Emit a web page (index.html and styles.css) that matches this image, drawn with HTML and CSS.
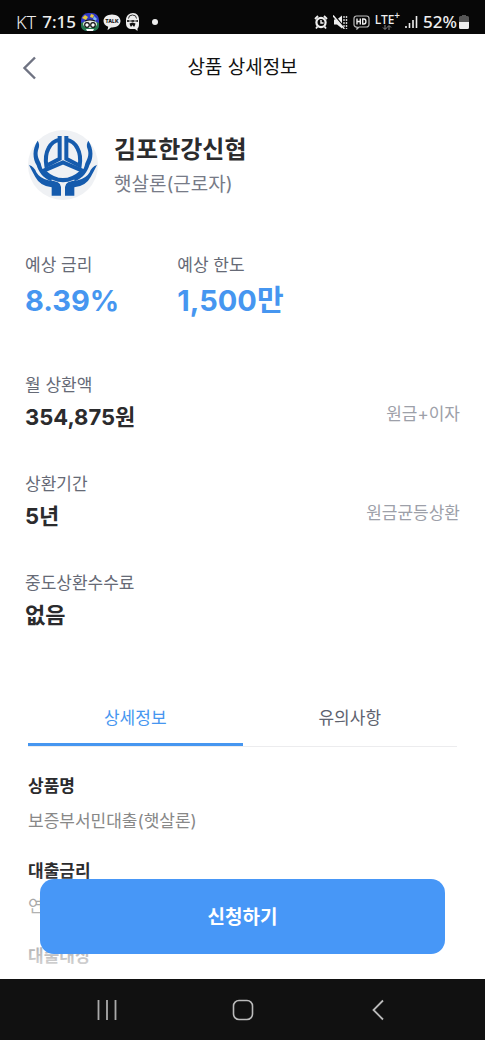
FILE: index.html
```html
<!DOCTYPE html>
<html lang="ko">
<head>
    <meta charset="UTF-8">
    <meta name="viewport" content="width=device-width, initial-scale=1.0">
    <title>상품 상세정보</title>
    <link rel="stylesheet" href="styles.css">
</head>
<body>
    <div class="status-bar">
        <span class="carrier">KT</span>
        <span class="clock">7:15</span>
        <div class="notices">
            <svg width="18" height="18" viewBox="0 0 18 18">
                <rect width="18" height="18" rx="7" fill="#3038c4"/>
                <path d="M1 5l3-3 3 2-2 3zM10 1l3 1-1 3-3-1z" fill="#e5c93a"/>
                <path d="M13 3l3 3-2 2-2-2z" fill="#7fb7ee"/>
                <path d="M0 10q9-5 18 0v2q0 6-7 6H7q-7 0-7-6z" fill="#26794f"/>
                <ellipse cx="9" cy="11" rx="7" ry="4" fill="#e8ece6"/>
                <circle cx="6" cy="12" r="2.3" fill="#fff" stroke="#111" stroke-width="1.2"/>
                <circle cx="12" cy="12" r="2.3" fill="#fff" stroke="#111" stroke-width="1.2"/>
                <path d="M4 8q5-2 10 0" fill="none" stroke="#111" stroke-width="1.2"/>
                <path d="M5 16h8l-1 2H6z" fill="#fff"/>
            </svg>
            <svg width="18" height="18" viewBox="0 0 18 18">
                <path d="M9 1.500c4.800 0 8.500 2.800 8.500 6.500s-3.700 6.500-8.500 6.500l-1 0-3.500 2.700.7-3.400C2.300 12.700.5 10.600.5 8 .5 4.300 4.200 1.500 9 1.500z" fill="#eee"/>
                <text x="9" y="10" class="talk">TALK</text>
            </svg>
            <svg width="16" height="18" viewBox="0 0 16 18">
                <path d="M8 0c4 0 6 3 6 7v4c0 2-.5 3.500-1.500 4.500V18L10 16H7c-4 0-6-2-6-6V7c0-4 3-7 7-7z" fill="#eee"/>
                <path d="M3.500 5.500q0-3.500 4-3.500t4 3.500" fill="none" stroke="#333"/>
                <path d="M2 7h11v2H2z" fill="#333"/>
                <path d="M4 8h2.500M9 8h2.500" stroke="#eee"/>
                <path d="M4.500 10.500l3-1 3 1-1 3h-1l-1-1.500-1 1.500h-1z" fill="#111"/>
            </svg>
            <span class="dot"></span>
        </div>
        <div class="signals">
            <svg width="14" height="16" viewBox="0 0 14 16">
                <circle cx="7" cy="8.500" r="4.600" fill="none" stroke="#eee" stroke-width="2.200"/>
                <path d="M1 5l3-3M13 5l-3-3M3.500 12.500l-1.500 2M10.500 12.500l1.500 2" stroke="#eee" stroke-width="1.800"/>
                <path d="M7 6v3h2.500" fill="none" stroke="#eee" stroke-width="1.400"/>
            </svg>
            <svg width="15" height="16" viewBox="0 0 15 16">
                <path d="M1 5.500h3L9 1.500v13L4 10.500H1z" fill="#eee"/>
                <path d="M1 1l10 12" stroke="#070707" stroke-width="1.500"/>
                <path d="M0 1.500l11 13" stroke="#eee" stroke-width="1.500"/>
                <path d="M11 2v13M13.500 2v13" fill="none" stroke="#ccc" stroke-width="1.400" stroke-dasharray="2 1"/>
            </svg>
            <svg width="17" height="16" viewBox="0 0 17 16">
                <path d="M3.500 2h10a2.500 2.500 0 0 1 2.500 2.500v6a2.500 2.500 0 0 1-2.500 2.500H6l-2 2v-2h-.5A2.500 2.500 0 0 1 1 10.500v-6A2.500 2.500 0 0 1 3.500 2z" fill="none" stroke="#bbb" stroke-width="1.200"/>
                <path d="M4 4.500v6M7.300 4.500v6M4 7.500h3.300M9.700 5v5h1.200q2 0 2-2.500t-2-2.500z" fill="none" stroke="#eee" stroke-width="1.400"/>
            </svg>
            <div class="lte">
                <span>LTE<sup>+</sup></span>
                <svg width="10" height="5" viewBox="0 0 10 5">
                    <path d="M3 0v4M1 2.500l2 2 2-2M7 5V1M5 2.500l2-2 2 2" fill="none" stroke="#888"/>
                </svg>
            </div>
            <svg width="13" height="14" viewBox="0 0 13 14">
                <path d="M1 11v2M4.500 8v5M8 5v8M11.500 1v12" stroke="#eee" stroke-width="1.600"/>
            </svg>
            <span class="percent">52%</span>
            <svg class="battery" width="10" height="14" viewBox="0 0 10 14">
                <path d="M3 0h4v1h1.500A1.500 1.500 0 0 1 10 2.500V7H0V2.500A1.500 1.500 0 0 1 1.500 1H3z" fill="#555"/>
                <path d="M0 7h10v5.500a1.500 1.500 0 0 1-1.500 1.500h-7A1.500 1.500 0 0 1 0 12.500z" fill="#eee"/>
            </svg>
        </div>
    </div>

    <header class="app-bar">
        <button type="button" class="back" aria-label="뒤로">
            <svg width="15" height="24" viewBox="0 0 15 24">
                <path d="M13 1.500L2.500 12 13 22.500" fill="none" stroke="#6f7382" stroke-width="2.400"/>
            </svg>
        </button>
        <h1>상품 상세정보</h1>
    </header>

    <div class="screen">
        <main class="content">
            <section class="brand">
                <svg class="logo" width="70" height="70" viewBox="6 6 210 210">
                    <circle cx="111" cy="111" r="105" fill="#eff1f4"/>
                    <g fill="none" stroke="#155bad" stroke-width="12">
                        <path d="M101 24v68L61 113Q56 82 68 60 78 40 101 35"/>
                        <path d="M121 24v68l40 21Q166 82 154 60 144 40 121 35"/>
                        <path d="M48 130l63-27 63 27"/>
                        <path d="M54 131Q111 182 168 131"/>
                    </g>
                    <g fill="#155bad">
                        <!-- fingers -->
                        <path d="M35 38C18 64 20 92 32 112 38 132 50 150 76 160L78 152C58 144 48 126 44 106 34 88 33 76 37 64 41 54 40 46 35 38z"/>
                        <path d="M187 38C204 64 202 92 190 112 184 132 172 150 146 160L144 152C164 144 174 126 178 106 188 88 189 76 185 64 181 54 182 46 187 38z"/>
                        <!-- palms and wrists -->
                        <path d="M9 111q16 5 22 22 10 18 36 24 38 2 38 20v26H77v-25Q42 174 28 147q-9-16-19-36z"/>
                        <path d="M213 111q-16 5-22 22-10 18-36 24-38 2-38 20v26h28v-25q35-4 49-31 9-16 19-36z"/>
                    </g>
                </svg>
                <div>
                    <h2>김포한강신협</h2>
                    <p>햇살론(근로자)</p>
                </div>
            </section>

            <dl class="rates">
                <div>
                    <dt>예상 금리</dt>
                    <dd>8.39%</dd>
                </div>
                <div>
                    <dt>예상 한도</dt>
                    <dd>1,500만</dd>
                </div>
            </dl>

            <div class="terms">
                <div class="term">
                    <div>
                        <p class="label">월 상환액</p>
                        <p class="value">354,875원</p>
                    </div>
                    <span class="note">원금+이자</span>
                </div>
                <div class="term">
                    <div>
                        <p class="label">상환기간</p>
                        <p class="value">5년</p>
                    </div>
                    <span class="note">원금균등상환</span>
                </div>
                <div class="term">
                    <div>
                        <p class="label">중도상환수수료</p>
                        <p class="value">없음</p>
                    </div>
                </div>
            </div>

            <div class="tabs" role="tablist">
                <button type="button" class="tab active" role="tab" aria-selected="true">상세정보</button>
                <button type="button" class="tab" role="tab" aria-selected="false">유의사항</button>
            </div>

            <section class="details">
                <div>
                    <h3>상품명</h3>
                    <p>보증부서민대출(햇살론)</p>
                </div>
                <div>
                    <h3>대출금리</h3>
                    <p>연</p>
                </div>
                <div>
                    <h3>대출대상</h3>
                </div>
            </section>
        </main>

        <div class="apply-area">
            <button type="button" class="apply">신청하기</button>
        </div>
    </div>

    <nav class="nav-bar">
        <button type="button" aria-label="최근 앱">
            <svg width="22" height="22" viewBox="0 0 22 22">
                <path d="M2.500 1v20M11 1v20M19.500 1v20" stroke="#aaa" stroke-width="1.800"/>
            </svg>
        </button>
        <button type="button" aria-label="홈">
            <svg width="22" height="22" viewBox="0 0 22 22">
                <rect x="1.500" y="1.500" width="19" height="19" rx="5.500" fill="none" stroke="#bbb" stroke-width="1.600"/>
            </svg>
        </button>
        <button type="button" aria-label="이전">
            <svg width="22" height="22" viewBox="0 0 22 22">
                <path d="M16 1.500L6.500 11l9.500 9.500" fill="none" stroke="#bbb" stroke-width="1.800"/>
            </svg>
        </button>
    </nav>
</body>
</html>
```

FILE: styles.css
```css
* {
    box-sizing: border-box;
}
body {
    display: flex;
    flex-direction: column;
    height: 100vh;
    margin: 0;
    font-family: Inter, "Noto Sans CJK KR", sans-serif;
    font-size: 17px;
    line-height: 28px;
    color: #2b2b2d;
    background: #fff;
}
h1, h2, h3, p, dl, dd {
    margin: 0;
}
svg {
    display: block;
    flex-shrink: 0;
}
button {
    padding: 0;
    border: none;
    background: none;
    font: inherit;
    color: inherit;
    cursor: pointer;
}

/* phone status bar */
.status-bar {
    display: flex;
    align-items: center;
    flex-shrink: 0;
    height: 34px;
    padding: 9px 16px 0;
    background: #070707;
    color: #eee;
    font-family: "Noto Sans", sans-serif;
    font-size: 18px;
    line-height: 24px;
}
.carrier {
    font-weight: 300;
}
.clock {
    margin-left: 6px;
    font-size: 17px;
    font-weight: 500;
}
.notices {
    display: flex;
    align-items: center;
    gap: 4px;
    margin-left: 5px;
}
.talk {
    font-family: Inter, sans-serif;
    font-size: 5px;
    font-weight: 800;
    text-anchor: middle;
    fill: #111;
}
.dot {
    width: 6px;
    height: 6px;
    margin-left: 7px;
    border-radius: 50%;
    background: #eee;
}
.signals {
    display: flex;
    align-items: center;
    gap: 5px;
    margin-left: auto;
}
.lte {
    display: flex;
    flex-direction: column;
    align-items: center;
    font-size: 12px;
    font-weight: 500;
    line-height: 11px;
}
.lte sup {
    font-size: 10px;
    line-height: 0;
}
.percent {
    font-size: 17px;
    font-weight: 500;
}
.battery {
    margin-left: -3px;
}

.app-bar {
    display: grid;
    grid-template-columns: 1fr auto 1fr;
    align-items: center;
    flex-shrink: 0;
    height: 66px;
    padding: 2px 22px 0;
}
.back {
    justify-self: start;
}
.app-bar h1 {
    font-size: 19px;
    font-weight: 400;
    color: #111;
}

.screen {
    position: relative;
    flex: 1;
    min-height: 0;
}
.content {
    height: 100%;
    padding: 28px 25px 0;
    overflow-y: auto;
    scrollbar-width: none;
}

.brand {
    display: flex;
    align-items: center;
    gap: 16px;
    padding-left: 3px;
}
.brand h2 {
    padding-top: 4px;
    font-size: 24px;
    font-weight: 700;
    line-height: 36px;
}
.brand p {
    font-size: 19px;
    line-height: 34px;
    color: #777b87;
}

.rates {
    display: grid;
    grid-template-columns: 35% 1fr;
    margin-top: 49px;
}
.rates dt, .label {
    color: #666a76;
}
.rates dd {
    font-size: 29px;
    font-weight: 700;
    line-height: 44px;
    color: #4696f0;
}

.terms {
    display: flex;
    flex-direction: column;
    gap: 35px;
    margin-top: 48px;
}
.term {
    display: flex;
    align-items: flex-end;
    justify-content: space-between;
}
.value {
    font-size: 22px;
    font-weight: 700;
    line-height: 36px;
}
.note {
    padding-bottom: 7px;
    color: #9da0a9;
}

.tabs {
    display: flex;
    margin: 55px 3px 0;
    border-bottom: 1px solid #ececee;
}
.tab {
    flex: 1;
    padding: 16px 0 11px;
    border-bottom: 3px solid transparent;
    color: #5e626e;
}
.tab.active {
    border-color: #4696f0;
    color: #4696f0;
}

.details {
    display: flex;
    flex-direction: column;
    gap: 22px;
    padding: 25px 3px 0;
}
.details h3 {
    font-size: 17px;
    font-weight: 700;
}
.details p {
    margin-top: 7px;
    color: #888;
}

/* floating button, content fades out behind it */
.apply-area {
    position: absolute;
    left: 0;
    right: 0;
    bottom: 0;
    padding: 10px 40px 25px;
    background: linear-gradient(rgba(255, 255, 255, 0), rgba(255, 255, 255, 0.9));
}
.apply {
    display: block;
    width: 100%;
    padding: 25px 24px 22px;
    border-radius: 14px;
    background: #4797f7;
    color: #fff;
    font-size: 19px;
    font-weight: 700;
}

.nav-bar {
    display: flex;
    align-items: center;
    flex-shrink: 0;
    height: 61px;
    padding: 0 39px;
    background: #111;
}
.nav-bar button {
    display: flex;
    justify-content: center;
    flex: 1;
}
```
